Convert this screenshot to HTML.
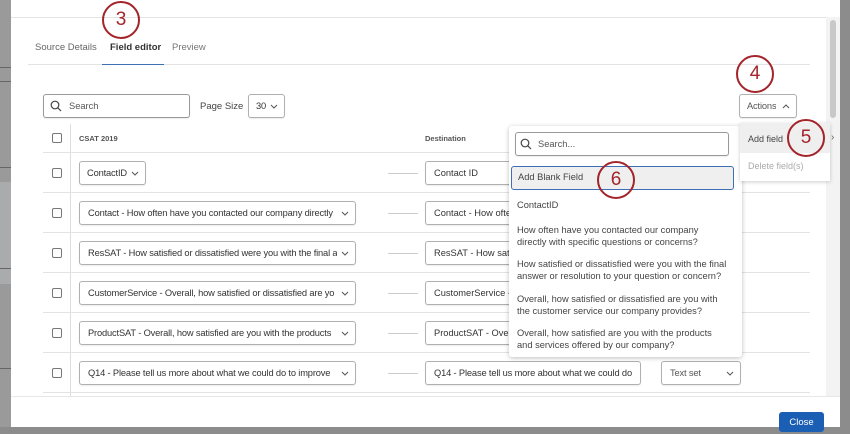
<!DOCTYPE html>
<html><head><style>
*{box-sizing:border-box;margin:0;padding:0}
body{width:850px;height:427px;overflow:hidden;background:#8c8c8c;font-family:"Liberation Sans",sans-serif;position:relative;font-size:10px;color:#333}
.a{position:absolute}
.sel{position:absolute;height:24px;border:1px solid #b0b0b0;border-radius:3px;background:#fff;font-size:9.3px;display:flex;align-items:center;justify-content:space-between;padding-left:8px;white-space:nowrap;overflow:hidden;color:#333;box-shadow:0 1px 1px rgba(0,0,0,.08)}
.sel .t{overflow:hidden;flex:0 1 auto;min-width:0;letter-spacing:-0.15px}
.sel svg{flex:none;margin-left:3px;margin-right:6px}
.cb{position:absolute;left:52px;width:10px;height:10px;border:1px solid #777;border-radius:2px;background:#fff}
.arr{position:absolute;left:388px;width:30px;height:1px;background:#ccc}
.circ{position:absolute;width:38px;height:38px;border:2.5px solid #a3242b;border-radius:50%;color:#a3242b;font-size:19px;text-align:center;line-height:33px}
.line{position:absolute;height:1px;background:#e3e3e3}
.dd{font-size:9.3px;line-height:12px;color:#444;position:absolute;left:517px;width:212px}
</style></head><body>
<svg width="0" height="0" style="position:absolute"><defs><symbol id="cv" viewBox="0 0 8 5"><path d="M1 1l3 3 3-3" fill="none" stroke="#555" stroke-width="1"/></symbol></defs></svg>
<div class="a" style="left:0;top:0;width:11px;height:427px;background:#9a9a9a"></div>
<div class="a" style="left:0;top:67px;width:11px;height:1px;background:#666"></div>
<div class="a" style="left:0;top:81px;width:11px;height:1px;background:#666"></div>
<div class="a" style="left:0;top:167px;width:11px;height:1px;background:#666"></div>
<div class="a" style="left:0;top:182px;width:11px;height:102px;background:#a9abad"></div>
<div class="a" style="left:0;top:268px;width:11px;height:1px;background:#666"></div>
<div class="a" style="left:0;top:368px;width:11px;height:1px;background:#666"></div>
<div class="a" style="left:11px;top:0;width:829px;height:427px;background:#fff"></div>
<div class="line" style="left:11px;top:17px;width:815px"></div>
<div class="a" style="left:826px;top:17px;width:14px;height:380px;background:#f3f3f3"></div>
<div class="a" style="left:830px;top:20px;width:6px;height:98px;background:#c8c8c8;border-radius:3px"></div>
<div class="a" style="left:35px;top:42px;font-size:9.5px;color:#666">Source Details</div>
<div class="a" style="left:110px;top:42px;font-size:9.5px;color:#333;font-weight:bold">Field editor</div>
<div class="a" style="left:172px;top:42px;font-size:9.5px;color:#777">Preview</div>
<div class="line" style="left:28px;top:64px;width:782px"></div>
<div class="a" style="left:102px;top:64px;width:62px;height:1px;background:#3d6fb5"></div>
<div class="sel" style="left:43px;top:94px;width:147px;color:#555;padding-left:25px;border-color:#999;justify-content:flex-start">Search</div>
<svg class="a" style="left:50px;top:100px" width="12" height="12"><circle cx="5" cy="5" r="3.8" fill="none" stroke="#444" stroke-width="1.2"/><line x1="7.8" y1="7.8" x2="11" y2="11" stroke="#444" stroke-width="1.2"/></svg>
<div class="a" style="left:200px;top:101px;font-size:9.5px;color:#444">Page Size</div>
<div class="sel" style="left:248px;top:94px;width:37px;padding-left:7px"><span class="t" style="overflow:visible">30</span><svg width="8" height="5"><use href="#cv"/></svg></div>
<div class="sel" style="left:739px;top:94px;width:58px;padding-left:7px;color:#555"><span class="t">Actions</span><svg width="8" height="5" style="transform:rotate(180deg)"><use href="#cv"/></svg></div>
<div class="a" style="left:70px;top:124px;width:1px;height:273px;background:#ddd"></div>
<div class="cb" style="top:133px"></div>
<div class="a" style="left:79px;top:134px;font-size:7.5px;font-weight:bold;color:#555">CSAT 2019</div>
<div class="a" style="left:425px;top:134px;font-size:7.5px;font-weight:bold;color:#555">Destination</div>
<div class="line" style="left:43px;top:152px;width:767px"></div>
<div class="line" style="left:43px;top:192px;width:767px"></div>
<div class="line" style="left:43px;top:232px;width:767px"></div>
<div class="line" style="left:43px;top:272px;width:767px"></div>
<div class="line" style="left:43px;top:312px;width:767px"></div>
<div class="line" style="left:43px;top:352px;width:767px"></div>
<div class="line" style="left:43px;top:392px;width:767px"></div>
<div class="cb" style="top:168px"></div><div class="sel" style="left:79px;top:161px;width:67px;padding-left:7px"><span class="t" style="overflow:visible">ContactID</span><svg width="8" height="5"><use href="#cv"/></svg></div><div class="arr" style="top:173px"></div><div class="sel" style="left:425px;top:161px;width:100px;justify-content:flex-start">Contact ID</div>
<div class="cb" style="top:208px"></div><div class="sel" style="left:79px;top:201px;width:277px"><span class="t">Contact - How often have you contacted our company directly</span><svg width="8" height="5"><use href="#cv"/></svg></div><div class="arr" style="top:213px"></div><div class="sel" style="left:425px;top:201px;width:100px;justify-content:flex-start">Contact - How ofte</div>
<div class="cb" style="top:248px"></div><div class="sel" style="left:79px;top:241px;width:277px"><span class="t">ResSAT - How satisfied or dissatisfied were you with the final a</span><svg width="8" height="5"><use href="#cv"/></svg></div><div class="arr" style="top:253px"></div><div class="sel" style="left:425px;top:241px;width:100px;justify-content:flex-start">ResSAT - How sati</div>
<div class="cb" style="top:288px"></div><div class="sel" style="left:79px;top:281px;width:277px"><span class="t">CustomerService - Overall, how satisfied or dissatisfied are yo</span><svg width="8" height="5"><use href="#cv"/></svg></div><div class="arr" style="top:293px"></div><div class="sel" style="left:425px;top:281px;width:100px;justify-content:flex-start">CustomerService -</div>
<div class="cb" style="top:328px"></div><div class="sel" style="left:79px;top:321px;width:277px"><span class="t">ProductSAT - Overall, how satisfied are you with the products</span><svg width="8" height="5"><use href="#cv"/></svg></div><div class="arr" style="top:333px"></div><div class="sel" style="left:425px;top:321px;width:100px;justify-content:flex-start">ProductSAT - Over</div>
<div class="cb" style="top:368px"></div><div class="sel" style="left:79px;top:361px;width:277px"><span class="t">Q14 - Please tell us more about what we could do to improve</span><svg width="8" height="5"><use href="#cv"/></svg></div><div class="arr" style="top:373px"></div><div class="sel" style="left:425px;top:361px;width:216px;justify-content:flex-start"><span class="t">Q14 - Please tell us more about what we could do</span></div>
<div class="sel" style="left:661px;top:361px;width:80px;color:#555"><span class="t">Text set</span><svg width="8" height="5"><use href="#cv"/></svg></div>
<div class="sel" style="left:700px;top:201px;width:41px"></div><div class="sel" style="left:700px;top:281px;width:41px"></div><div class="sel" style="left:700px;top:321px;width:41px"></div>
<div class="a" style="left:509px;top:126px;width:233px;height:231px;background:#fff;border-radius:3px;box-shadow:0 1px 5px rgba(0,0,0,.25)"></div>
<div class="sel" style="left:515px;top:132px;width:214px;padding-left:22px;color:#555;border-color:#999;justify-content:flex-start">Search...</div>
<svg class="a" style="left:520px;top:138px" width="12" height="12"><circle cx="5" cy="5" r="3.8" fill="none" stroke="#444" stroke-width="1.2"/><line x1="7.8" y1="7.8" x2="11" y2="11" stroke="#444" stroke-width="1.2"/></svg>
<div class="a" style="left:511px;top:166px;width:223px;height:24px;background:#efefef;border:1.5px solid #3d6fb5;border-radius:3px;font-size:9.3px;line-height:21px;padding-left:6px;color:#444">Add Blank Field</div>
<div class="dd" style="top:199px">ContactID</div>
<div class="dd" style="top:224px">How often have you contacted our company directly with specific questions or concerns?</div>
<div class="dd" style="top:258px">How satisfied or dissatisfied were you with the final answer or resolution to your question or concern?</div>
<div class="dd" style="top:293px">Overall, how satisfied or dissatisfied are you with the customer service our company provides?</div>
<div class="dd" style="top:327px">Overall, how satisfied are you with the products and services offered by our company?</div>
<div class="a" style="left:740px;top:123px;width:90px;height:58px;background:#fff;box-shadow:0 1px 4px rgba(0,0,0,.2)"></div>
<div class="a" style="left:740px;top:123px;width:90px;height:30px;background:#efefef"></div>
<div class="a" style="left:748px;top:134px;font-size:9px;color:#444">Add field</div>
<div class="a" style="left:831px;top:132px;font-size:10px;color:#666">›</div>
<div class="a" style="left:748px;top:161px;font-size:9px;color:#aaa">Delete field(s)</div>
<div class="line" style="left:11px;top:396px;width:829px;background:#e8e8e8"></div>
<div class="a" style="left:779px;top:412px;width:45px;height:20px;background:#1a5fb4;border-radius:3px;color:#fff;font-size:9.5px;text-align:center;line-height:22px">Close</div>
<div class="circ" style="left:102px;top:1px">3</div>
<div class="circ" style="left:736px;top:55px">4</div>
<div class="circ" style="left:787px;top:119px">5</div>
<div class="circ" style="left:597px;top:161px">6</div>
</body></html>
